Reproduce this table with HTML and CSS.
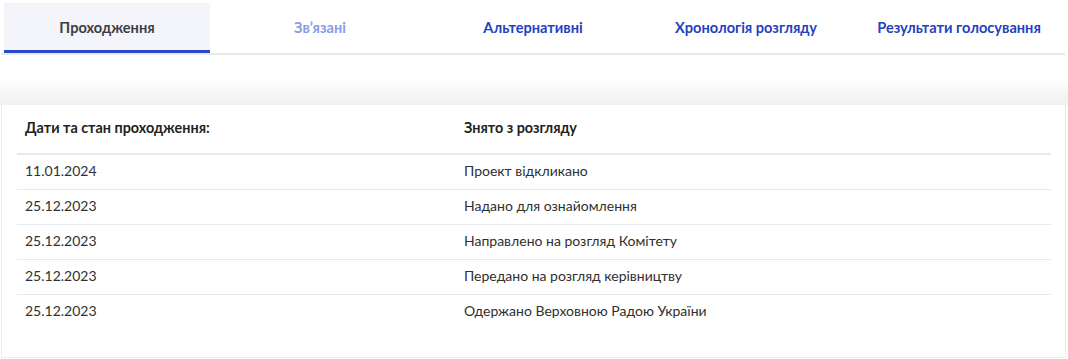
FILE: index.html
```html
<!DOCTYPE html>
<html lang="uk">
<head>
<meta charset="utf-8">
<title>Проходження</title>
<link rel="stylesheet" href="styles.css">
</head>
<body>
<nav class="tabs">
  <div class="tab tab-active">Проходження</div>
  <div class="tab tab-disabled">Зв’язані</div>
  <div class="tab tab-link">Альтернативні</div>
  <div class="tab tab-link">Хронологія розгляду</div>
  <div class="tab tab-link">Результати голосування</div>
</nav>
<div class="fade"></div>
<section class="card">
  <div class="row row-head">
    <div class="cell-date">Дати та стан проходження:</div>
    <div class="cell-state">Знято з розгляду</div>
  </div>
  <div class="row">
    <div class="cell-date">11.01.2024</div>
    <div class="cell-state">Проект відкликано</div>
  </div>
  <div class="row">
    <div class="cell-date">25.12.2023</div>
    <div class="cell-state">Надано для ознайомлення</div>
  </div>
  <div class="row">
    <div class="cell-date">25.12.2023</div>
    <div class="cell-state">Направлено на розгляд Комітету</div>
  </div>
  <div class="row">
    <div class="cell-date">25.12.2023</div>
    <div class="cell-state">Передано на розгляд керівництву</div>
  </div>
  <div class="row row-last">
    <div class="cell-date">25.12.2023</div>
    <div class="cell-state">Одержано Верховною Радою України</div>
  </div>
</section>
</body>
</html>
```

FILE: styles.css
```css
html, body {
  margin: 0;
  padding: 0;
  background: #ffffff;
}

body {
  font-family: Lato, "Open Sans", "Noto Sans", sans-serif;
  color: #2b2b2b;
}

.tabs {
  display: grid;
  grid-template-columns: repeat(5, 206px);
  column-gap: 7px;
  width: 1061px;
  margin: 0 0 0 1px;
  padding: 3px 0 0 3px;
  border-bottom: 2px solid #e7e8ee;
}

.tab {
  height: 47px;
  display: flex;
  align-items: center;
  justify-content: center;
  font-size: 14.6px;
  font-weight: 700;
  border-bottom: 3px solid transparent;
  padding-top: 1px;
  box-sizing: border-box;
  height: 50px;
}

.tab-active {
  background: #f4f5fa;
  color: #3d3e42;
  border-bottom-color: #2a48c6;
}

.tab-disabled {
  color: #8a9ce2;
}

.tab-link {
  color: #2441c2;
}

.fade {
  height: 50px;
  background: linear-gradient(to bottom, #ffffff 0%, #ffffff 45%, #f0f0f0 100%);
}

.card {
  margin: 0 2px 0 1px;
  background: #ffffff;
  border: 1px solid #ececec;
  border-top: none;
  padding: 0 14px 28px 15px;
}

.row {
  display: flex;
  height: 34px;
  align-items: center;
  border-bottom: 1px solid #e6e9ee;
  font-size: 14px;
  color: #303030;
  box-sizing: content-box;
  padding-bottom: 0;
}

.row > div {
  margin-top: -3px;
}

.row-head {
  height: 48px;
  border-bottom-width: 2px;
  font-size: 14.4px;
  font-weight: 700;
  color: #222222;
}

.row-head > div {
  margin-top: -4px;
}

.row-last {
  border-bottom: none;
}

.cell-date {
  width: 439px;
  padding-left: 8px;
}

.cell-state {
  flex: 1;
}
```
